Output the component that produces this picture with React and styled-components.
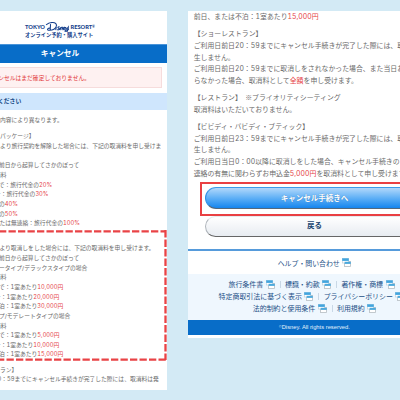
import React from "react";
import styled, { createGlobalStyle } from "styled-components";

const GlobalStyle = createGlobalStyle`
  * {
    box-sizing: border-box;
  }
  body {
    margin: 0;
    background: #d3eaf5;
    font-family: "Noto Sans CJK JP", "Noto Sans", sans-serif;
    overflow: hidden;
  }
  p, h1, h2 {
    margin: 0;
  }
`;

// x = where the line starts, the phone screen is cut off on the left
const policy = [
  { x: 0, t: "内容により異なります。", gap: 7.2 },
  { x: 0, t: "パッケージ】" },
  { x: 0, t: "より旅行契約を解除した場合には、下記の取消料を申し受けま", gap: 9.6 },
  { x: -1, t: "前日から起算してさかのぼって" },
  { x: -5, t: "消料" },
  { x: -1.3, t: "で：旅行代金の", r: "20%" },
  { x: -5, t: "ー：旅行代金の", r: "30%" },
  { x: -1, t: "の", r: "40%" },
  { x: -1, t: "の", r: "50%" },
  { x: -0.5, t: "たは無連絡：旅行代金の", r: "100%" },
];

const hotel = [
  { x: -0.6, t: "より取消しをした場合には、下記の取消料を申し受けます。" },
  { x: -1, t: "前日から起算してさかのぼって" },
  { x: -1, t: "ータイプ/デラックスタイプの場合" },
  { x: -5, t: "消料" },
  { x: -1, t: "で：1室あたり", r: "10,000円" },
  { x: -5, t: "ー：1室あたり", r: "20,000円" },
  { x: -1, t: "泊：1室あたり", r: "30,000円" },
  { x: -1, t: "プ/モデレートタイプの場合" },
  { x: -5, t: "消料" },
  { x: -1, t: "で：1室あたり", r: "5,000円" },
  { x: -5, t: "ー：1室あたり", r: "10,000円" },
  { x: -1, t: "泊：1室あたり", r: "15,000円" },
];

const rules = [
  [{ t: "前日、または不泊：1室あたり", r: "15,000円" }],
  [
    { t: "【ショーレストラン】" },
    { t: "ご利用日前日20：59までにキャンセル手続きが完了した際には、取消料は発" },
    { t: "生しません。" },
    { t: "ご利用日前日20：59までに取消しをされなかった場合、また当日お越しにな" },
    { t: "らなかった場合、取消料として", r: "全額", e: "を申し受けます。" },
  ],
  [
    { t: "【レストラン】　※プライオリティシーティング", cjk: true },
    { t: "取消料はいただいておりません。" },
  ],
  [
    { t: "【ビビディ・バビディ・ブティック】" },
    { t: "ご利用日前日23：59までにキャンセル手続きが完了した際には、取消料は発" },
    { t: "生しません。" },
    { t: "ご利用日当日0：00以降に取消しをした場合、キャンセル手続きの" },
    { t: "連絡の有無に関わらずお申込金", r: "5,000円", e: "を取消料として申し受けます。" },
  ],
];

const links = [
  ["旅行条件書", "標識・約款", "著作権・商標"],
  ["特定商取引法に基づく表示", "プライバシーポリシー"],
  ["法的制約と使用条件", "利用規約"],
];

function WindowIcon() {
  return (
    <Icon viewBox="0 0 9 9">
      <rect x="2.5" y="3.5" width="6" height="5" fill="#fff" stroke="#b5bcc2" strokeWidth=".8" />
      <rect x=".5" y=".6" width="6" height="4.4" fill="#fff" stroke="#b9cbd8" strokeWidth=".6" />
      <rect x=".2" y=".3" width="6.6" height="2.6" fill="#42a5de" />
      <rect x="2.6" y="3.8" width="6.2" height="2.1" fill="#4da9dc" />
    </Icon>
  );
}

function Logo() {
  return (
    <LogoBox>
      <LogoTop>
        <span>TOKYO</span>
        <Script viewBox="0 0 24 10">
          <path d="M1 2.7C5-.6 11-.2 11 3.4 11 6.5 7 8.2 3.8 7.9 1.6 7.6 2 5.8 5.5 5.6M5.3 2L5 8" />
          <path d="M10.8 5L10.3 7.7M11.2 3.2L11.5 3M14 4.6C12.2 4.3 11.9 5.5 13.2 6 14.4 6.8 13 8 11.6 7.3M14.8 5L14.4 7.7C15 5.3 17 4 16.7 5.6L16.3 7.7M17.6 6.5C20 5.8 19.2 4.3 18 5.2 17 6.5 18 8.2 19.7 7M20 4.8C19.7 7 20.5 7.4 22.4 4.8 22.2 8.4 21 10.2 19.4 9.2 18.8 8.4 21 7.6 23 7" />
        </Script>
        <span>RESORT</span>
        <Reg>®</Reg>
      </LogoTop>
      <LogoSub>オンライン予約・購入サイト</LogoSub>
    </LogoBox>
  );
}

function Lines({ items }) {
  return items.map((l, i) => (
    <Line key={i} $x={l.x} $gap={l.gap}>
      {l.t}
      {l.r && <Red>{l.r}</Red>}
    </Line>
  ));
}

function App() {
  return (
    <Screen>
      <GlobalStyle />
      <LeftPhone>
        <Logo />
        <TitleBar>キャンセル</TitleBar>
        <Alert>ャンセルはまだ確定しておりません。</Alert>
        <SectionBar>ください</SectionBar>
        <Policy>
          <Lines items={policy} />
        </Policy>
        <DashedBox>
          <DashLines viewBox="0 0 167 131">
            <path d="M-1 1.3H165.5" />
            <path d="M165.5 .1V129.9" />
            <path d="M-3 129.7H166.5" />
          </DashLines>
          <Lines items={hotel} />
        </DashedBox>
        <Tail>
          <Line $x={0}>ラン】</Line>
          <Line $x={-2.4}>0：59までにキャンセル手続きが完了した際には、取消料は発</Line>
        </Tail>
      </LeftPhone>
      <RightPhone>
        <Rules>
          {rules.map((group, i) => (
            <Group key={i}>
              {group.map((l, j) => (
                <RuleLine key={j} $cjk={l.cjk}>
                  {l.t}
                  {l.r && <Red>{l.r}</Red>}
                  {l.e}
                </RuleLine>
              ))}
            </Group>
          ))}
        </Rules>
        <RedFrame>
          <Button $primary>キャンセル手続きへ</Button>
        </RedFrame>
        <BackRow>
          <Button>戻る</Button>
        </BackRow>
        <Help>
          ヘルプ・問い合わせ
          <WindowIcon />
        </Help>
        <Links>
          {links.map((row, i) => (
            <LinkRow key={i}>
              {row.map((name, j) => (
                <Link key={name} $first={j === 0}>
                  {name}
                  <WindowIcon />
                </Link>
              ))}
              {i < 2 && <EndRule />}
            </LinkRow>
          ))}
        </Links>
        <Copyright>
          <small>©</small>Disney. All rights reserved.
        </Copyright>
      </RightPhone>
    </Screen>
  );
}

export default App;

const Screen = styled.main`
  display: flex;
  align-items: flex-start;
  gap: 21px;
  width: 400px;
  height: 400px;
  padding-top: 11px;
  overflow: hidden;
  background: #d3eaf5;
`;

const LeftPhone = styled.section`
  flex: none;
  width: 167px;
  height: 379px;
  background: #fff;
  overflow: hidden;
`;

const RightPhone = styled.section`
  flex: none;
  width: 253px;
  height: 327px;
  background: #fff;
`;

const LogoBox = styled.header`
  height: 33px;
  padding: 11px 0 0 25px;
  color: #153f8c;
`;

const LogoTop = styled.div`
  display: flex;
  align-items: center;
  height: 10px;
  font-family: Lato, sans-serif;
  font-size: 5.7px;
  font-weight: 900;
  line-height: 10px;
`;

const Script = styled.svg`
  width: 25px;
  height: 10.5px;
  margin: 0 0.5px 0 0;
  fill: none;
  stroke: #153f8c;
  stroke-width: 1;
`;

const Reg = styled.span`
  font-size: 3px;
`;

const LogoSub = styled.p`
  margin-top: -1px;
  font-size: 5.25px;
  font-weight: 700;
  line-height: 9px;
  white-space: nowrap;
`;

const TitleBar = styled.h1`
  height: 19px;
  padding-right: 47px;
  border-top: 1px solid #4a94d8;
  background: #086dc8;
  color: #fff;
  font-size: 7.7px;
  font-weight: 700;
  line-height: 16px;
  text-align: center;
`;

const Alert = styled.p`
  height: 21px;
  margin: 4px 5px 5px 0;
  border: 1px solid #f6dcdc;
  border-left: 0;
  background: #fef1f1;
  color: #e2393c;
  font-size: 5.77px;
  line-height: 19px;
  text-indent: -7.5px;
  white-space: nowrap;
`;

const SectionBar = styled.h2`
  height: 17px;
  background: #cfe6fd;
  color: #174a85;
  font-size: 5.8px;
  font-weight: 700;
  line-height: 16px;
  text-indent: -2px;
`;

const Policy = styled.div`
  height: 120px;
  padding-top: 4.6px;
`;

const Line = styled.p`
  height: 9.65px;
  margin-left: ${(p) => p.$x}px;
  margin-bottom: ${(p) => p.$gap || 0}px;
  color: #6a6a6a;
  font-family: Inter, "Noto Sans CJK JP", sans-serif;
  font-size: 5.77px;
  font-variant-numeric: tabular-nums;
  line-height: 9.65px;
  white-space: nowrap;
`;

const Red = styled.span`
  color: #e64448;
`;

const DashedBox = styled.div`
  position: relative;
  height: 131px;
  padding-top: 13.4px;
`;

const DashLines = styled.svg`
  position: absolute;
  top: 0;
  left: 0;
  width: 167px;
  height: 131px;
  fill: none;
  stroke: #e94346;
  stroke-width: 2.3;
  stroke-dasharray: 7.3 2.2;
`;

const Tail = styled.div`
  padding-top: 3.6px;
`;

const Rules = styled.div`
  height: 170.5px;
  padding-left: 5.7px;
  overflow: hidden;
`;

const Group = styled.div`
  margin-bottom: 5.8px;
`;

const RuleLine = styled.p`
  height: 11.6px;
  color: #6a6a6a;
  font-family: ${(p) => (p.$cjk ? "" : "Inter, ")}"Noto Sans CJK JP", sans-serif;
  font-size: 6.88px;
  font-variant-numeric: tabular-nums;
  line-height: 11.6px;
  white-space: nowrap;
`;

const RedFrame = styled.div`
  height: 34.5px;
  margin: 0 12px;
  padding: 3.5px 3px 0;
  border: 2px solid #e94043;
`;

const BackRow = styled.div`
  height: 33px;
  padding: 0 17px;
`;

const Button = styled.button`
  display: block;
  width: 100%;
  height: ${(p) => (p.$primary ? 22 : 20.5)}px;
  padding: ${(p) => (p.$primary ? "0" : "0 0 2.5px")};
  border: ${(p) => (p.$primary ? "1px solid #2f8fe4" : "1px solid #aeb4ba")};
  border-top-color: ${(p) => (p.$primary ? "#3c9bea" : "#e6eaee")};
  border-bottom-color: ${(p) => (p.$primary ? "#55697c" : "#666")};
  border-radius: 11px;
  background: ${(p) =>
    p.$primary
      ? "linear-gradient(#b2d8fb, #5fb0f6 50%, #1585ee)"
      : "linear-gradient(#fff, #f3f5f8 50%, #e8ecf1)"};
  color: ${(p) => (p.$primary ? "#fff" : "#1b4672")};
  font-family: inherit;
  font-size: 7.5px;
  font-weight: 700;
  line-height: 16px;
  text-shadow: ${(p) => (p.$primary ? "0 0 1px #2c6fae" : "none")};
`;

const Icon = styled.svg`
  width: 9px;
  height: 9px;
  margin-left: 2.5px;
`;

const Help = styled.div`
  display: flex;
  align-items: center;
  justify-content: center;
  height: 25px;
  border-top: 2px solid #569bdb;
  color: #1c4f86;
  font-size: 6.9px;
`;

const Links = styled.nav`
  height: 46px;
  padding-top: 4.6px;
  background: #eff7fe;
`;

const LinkRow = styled.div`
  display: flex;
  justify-content: center;
  height: 11.8px;
`;

const Link = styled.a`
  display: flex;
  align-items: center;
  height: 11.8px;
  color: #1c4f86;
  font-size: 6.95px;
  white-space: nowrap;

  &::before {
    content: "";
    display: ${(p) => (p.$first ? "none" : "block")};
    width: 1px;
    height: 7px;
    margin: 0 4.3px 0 5px;
    background: #c9d8e6;
  }
`;

const EndRule = styled.span`
  width: 1px;
  height: 7px;
  margin: 2.4px 0 0 5px;
  background: #c9d8e6;
`;

const Copyright = styled.footer`
  height: 15px;
  background: #086dc8;
  color: #e5f1fc;
  font-family: "Liberation Sans", sans-serif;
  font-size: 5.8px;
  line-height: 15px;
  text-align: center;

  small {
    font-size: 3.5px;
    vertical-align: 1px;
  }
`;
